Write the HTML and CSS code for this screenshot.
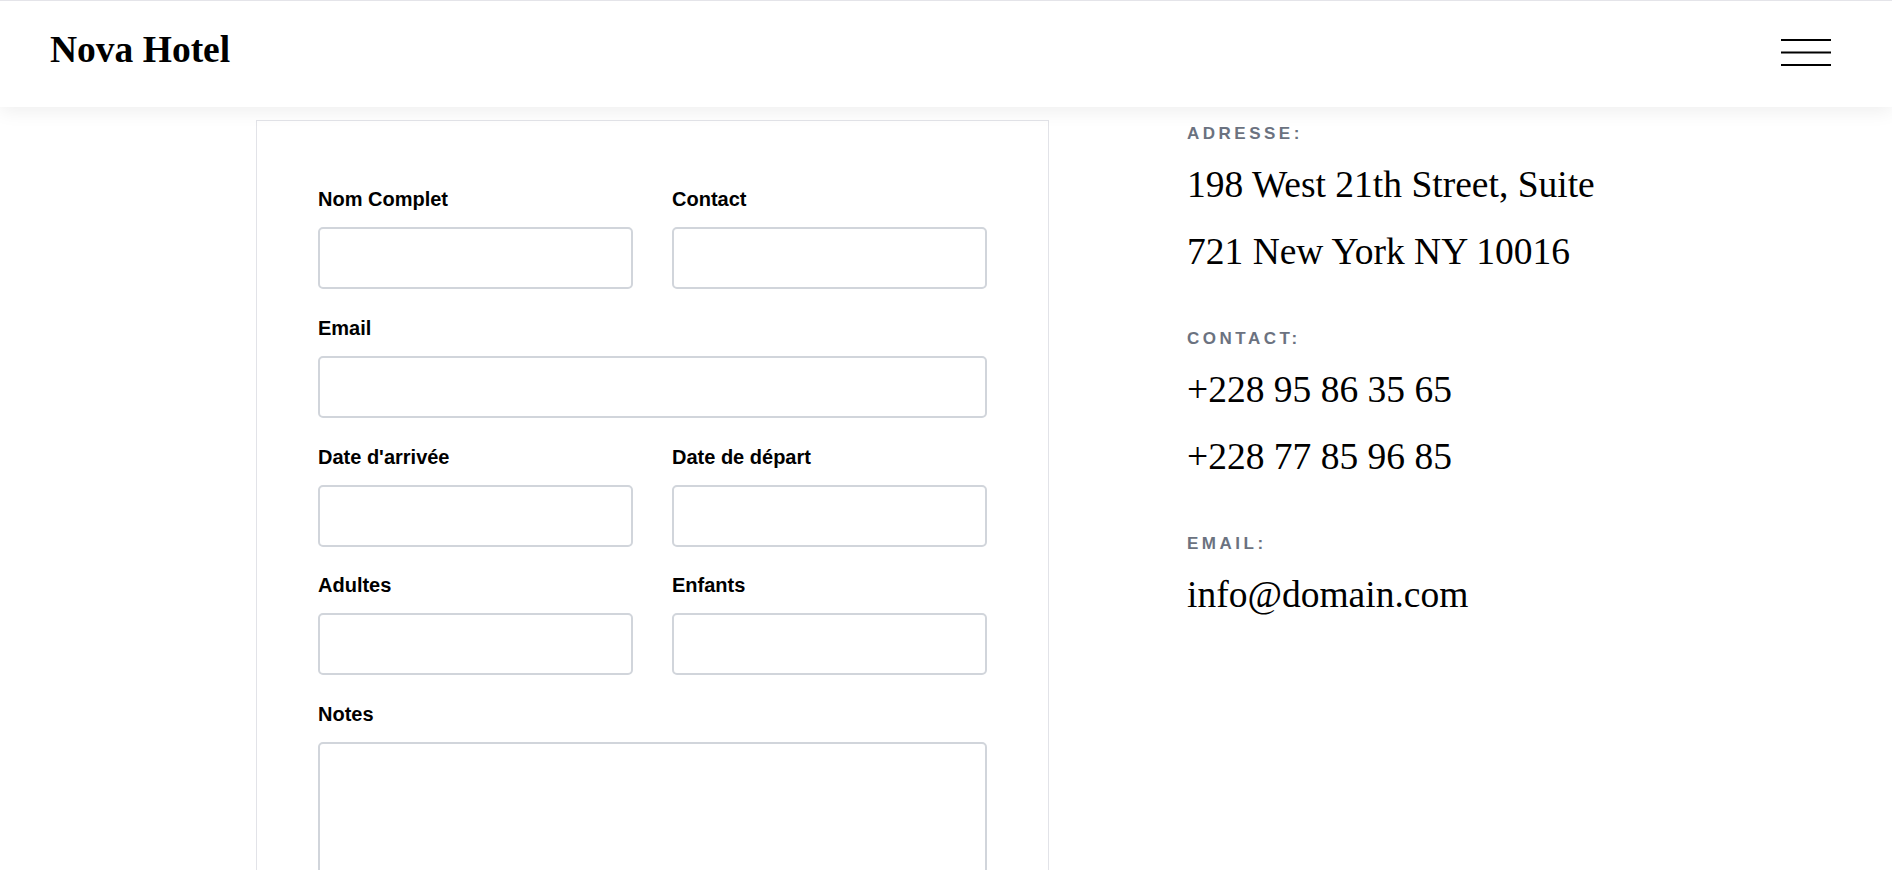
FILE: index.html
```html
<!DOCTYPE html>
<html lang="fr">
<head>
<meta charset="utf-8">
<title>Nova Hotel</title>
<link rel="stylesheet" href="styles.css">
</head>
<body>
<header class="site-header">
  <div class="logo">Nova Hotel</div>
  <button class="menu-btn" aria-label="Menu">
    <svg width="50" height="30" viewBox="0 0 50 30">
      <line x1="0" y1="2" x2="50" y2="2" stroke="#000" stroke-width="2.2"/>
      <line x1="0" y1="14.5" x2="50" y2="14.5" stroke="#000" stroke-width="2.2"/>
      <line x1="0" y1="27" x2="50" y2="27" stroke="#000" stroke-width="2.2"/>
    </svg>
  </button>
</header>
<main class="page">
  <form class="card">
    <div class="grid">
      <div class="field">
        <label class="label">Nom Complet</label>
        <input class="input" type="text">
      </div>
      <div class="field">
        <label class="label">Contact</label>
        <input class="input" type="text">
      </div>
      <div class="field full">
        <label class="label">Email</label>
        <input class="input" type="email">
      </div>
      <div class="field">
        <label class="label">Date d'arrivée</label>
        <input class="input" type="text">
      </div>
      <div class="field">
        <label class="label">Date de départ</label>
        <input class="input" type="text">
      </div>
      <div class="field">
        <label class="label">Adultes</label>
        <input class="input" type="text">
      </div>
      <div class="field">
        <label class="label">Enfants</label>
        <input class="input" type="text">
      </div>
      <div class="field full">
        <label class="label">Notes</label>
        <textarea class="input textarea"></textarea>
      </div>
    </div>
  </form>
  <aside class="info">
    <section class="info-block">
      <h3 class="info-label">Adresse:</h3>
      <p class="info-value">198 West 21th Street, Suite<br>721 New York NY 10016</p>
    </section>
    <section class="info-block">
      <h3 class="info-label">Contact:</h3>
      <p class="info-value">+228 95 86 35 65<br>+228 77 85 96 85</p>
    </section>
    <section class="info-block">
      <h3 class="info-label">Email:</h3>
      <p class="info-value">info@domain.com</p>
    </section>
  </aside>
</main>
</body>
</html>
```

FILE: styles.css
```css
* { box-sizing: border-box; }

html, body {
  margin: 0;
  padding: 0;
  background: #fff;
  color: #000;
}

body {
  font-family: "Liberation Serif", "Times New Roman", serif;
  overflow: hidden;
  height: 870px;
}

.site-header {
  position: relative;
  z-index: 2;
  height: 107px;
  border-top: 1px solid #e4e4e9;
  background: #fff;
  display: flex;
  justify-content: space-between;
  align-items: flex-start;
  padding: 28px 61px 0 50px;
  box-shadow: 0 4px 18px rgba(0, 0, 0, 0.07);
}

.logo {
  font-family: "Liberation Serif", "Times New Roman", serif;
  font-weight: bold;
  font-size: 37.5px;
  line-height: 42px;
}

.menu-btn {
  background: none;
  border: 0;
  padding: 0;
  margin-top: 9px;
  cursor: pointer;
  display: block;
}

.menu-btn svg { display: block; }

.page {
  display: flex;
  align-items: flex-start;
  padding: 13px 0 0 256px;
  gap: 138px;
}

.card {
  width: 793px;
  flex: none;
  border: 1px solid #e2e3e8;
  padding: 67px 61px 60px 61px;
  background: #fff;
}

.grid {
  display: grid;
  grid-template-columns: 1fr 1fr;
  column-gap: 39px;
  row-gap: 27.75px;
}

.field {
  display: flex;
  flex-direction: column;
}

.field.full { grid-column: 1 / -1; }

.label {
  font-family: "Liberation Sans", Arial, sans-serif;
  font-weight: bold;
  font-size: 20px;
  line-height: 23px;
  margin-bottom: 16px;
}

.input {
  height: 62px;
  width: 100%;
  border: 2px solid #d1d5db;
  border-radius: 5px;
  background: #fff;
  font-family: "Liberation Sans", Arial, sans-serif;
  font-size: 18px;
  padding: 8px 12px;
}

.textarea {
  height: 240px;
  resize: vertical;
}

.info {
  padding-top: 4px;
}

.info-block + .info-block {
  margin-top: 44px;
}

.info-label {
  margin: 0 0 7px;
  font-family: "Liberation Sans", Arial, sans-serif;
  font-weight: bold;
  font-size: 17px;
  line-height: 20px;
  letter-spacing: 3.5px;
  text-transform: uppercase;
  color: #6b7280;
}

.info-value {
  margin: 0;
  font-family: "Liberation Serif", "Times New Roman", serif;
  font-size: 37.5px;
  line-height: 67px;
}
```
